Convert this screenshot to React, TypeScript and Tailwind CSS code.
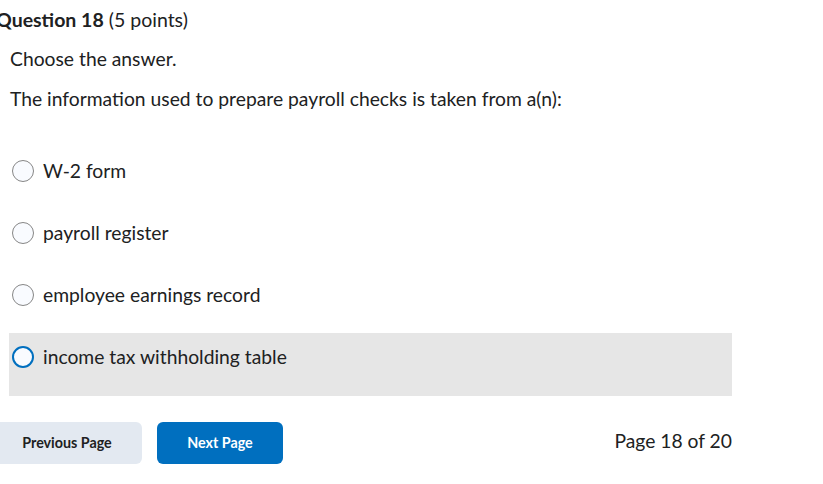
const options = [
  { id: 1, label: 'W-2 form' },
  { id: 2, label: 'payroll register' },
  { id: 3, label: 'employee earnings record' },
  { id: 4, label: 'income tax withholding table', focused: true },
];

function Radio({ focused }: { focused?: boolean }) {
  return (
    <span
      className={`inline-block w-[22px] h-[22px] rounded-full bg-[#f9fbff] shrink-0 ${
        focused ? 'border-[2.5px] border-[#006fbf]' : 'border border-[#868686]'
      }`}
    />
  );
}

export default function App() {
  return (
    <div className="relative w-[823px] h-[484px] overflow-hidden bg-white text-[#202122] font-['Lato','Liberation_Sans',sans-serif]">
      {/* Heading */}
      <div className="ml-[-4px] pt-[7px] text-[19.5px] leading-[26px] whitespace-nowrap">
        <span className="font-bold">Question 18</span> (5 points)
      </div>

      {/* Prompt */}
      <div className="pl-[10px] pt-[13px] text-[19.3px] leading-[26px]">
        <p>Choose the answer.</p>
        <p className="mt-[14px]">The information used to prepare payroll checks is taken from a(n):</p>
      </div>

      {/* Options */}
      <div className="mt-[35px] w-[723px] ml-[9px]">
        {options.map((o) => (
          <div
            key={o.id}
            className={`flex items-start pt-[13px] pl-[3px] gap-[9px] ${
              o.focused ? 'h-[63px] bg-[#e6e6e6]' : 'h-[62px]'
            }`}
          >
            <Radio focused={o.focused} />
            <span className="text-[19.3px] leading-[22px]">{o.label}</span>
          </div>
        ))}
      </div>

      {/* Footer */}
      <div className="mt-[26px] w-[732px] flex items-center">
        <button className="ml-[-8px] h-[42px] w-[150px] rounded-[6px] bg-[#e3e9f1] text-[14.3px] font-bold text-[#202122]">
          Previous Page
        </button>
        <button className="ml-[15px] h-[42px] w-[126px] rounded-[6px] bg-[#006fbf] text-[14.3px] font-bold text-white">
          Next Page
        </button>
        <span className="ml-auto mb-[4px] text-[19.3px]">Page 18 of 20</span>
      </div>
    </div>
  );
}
